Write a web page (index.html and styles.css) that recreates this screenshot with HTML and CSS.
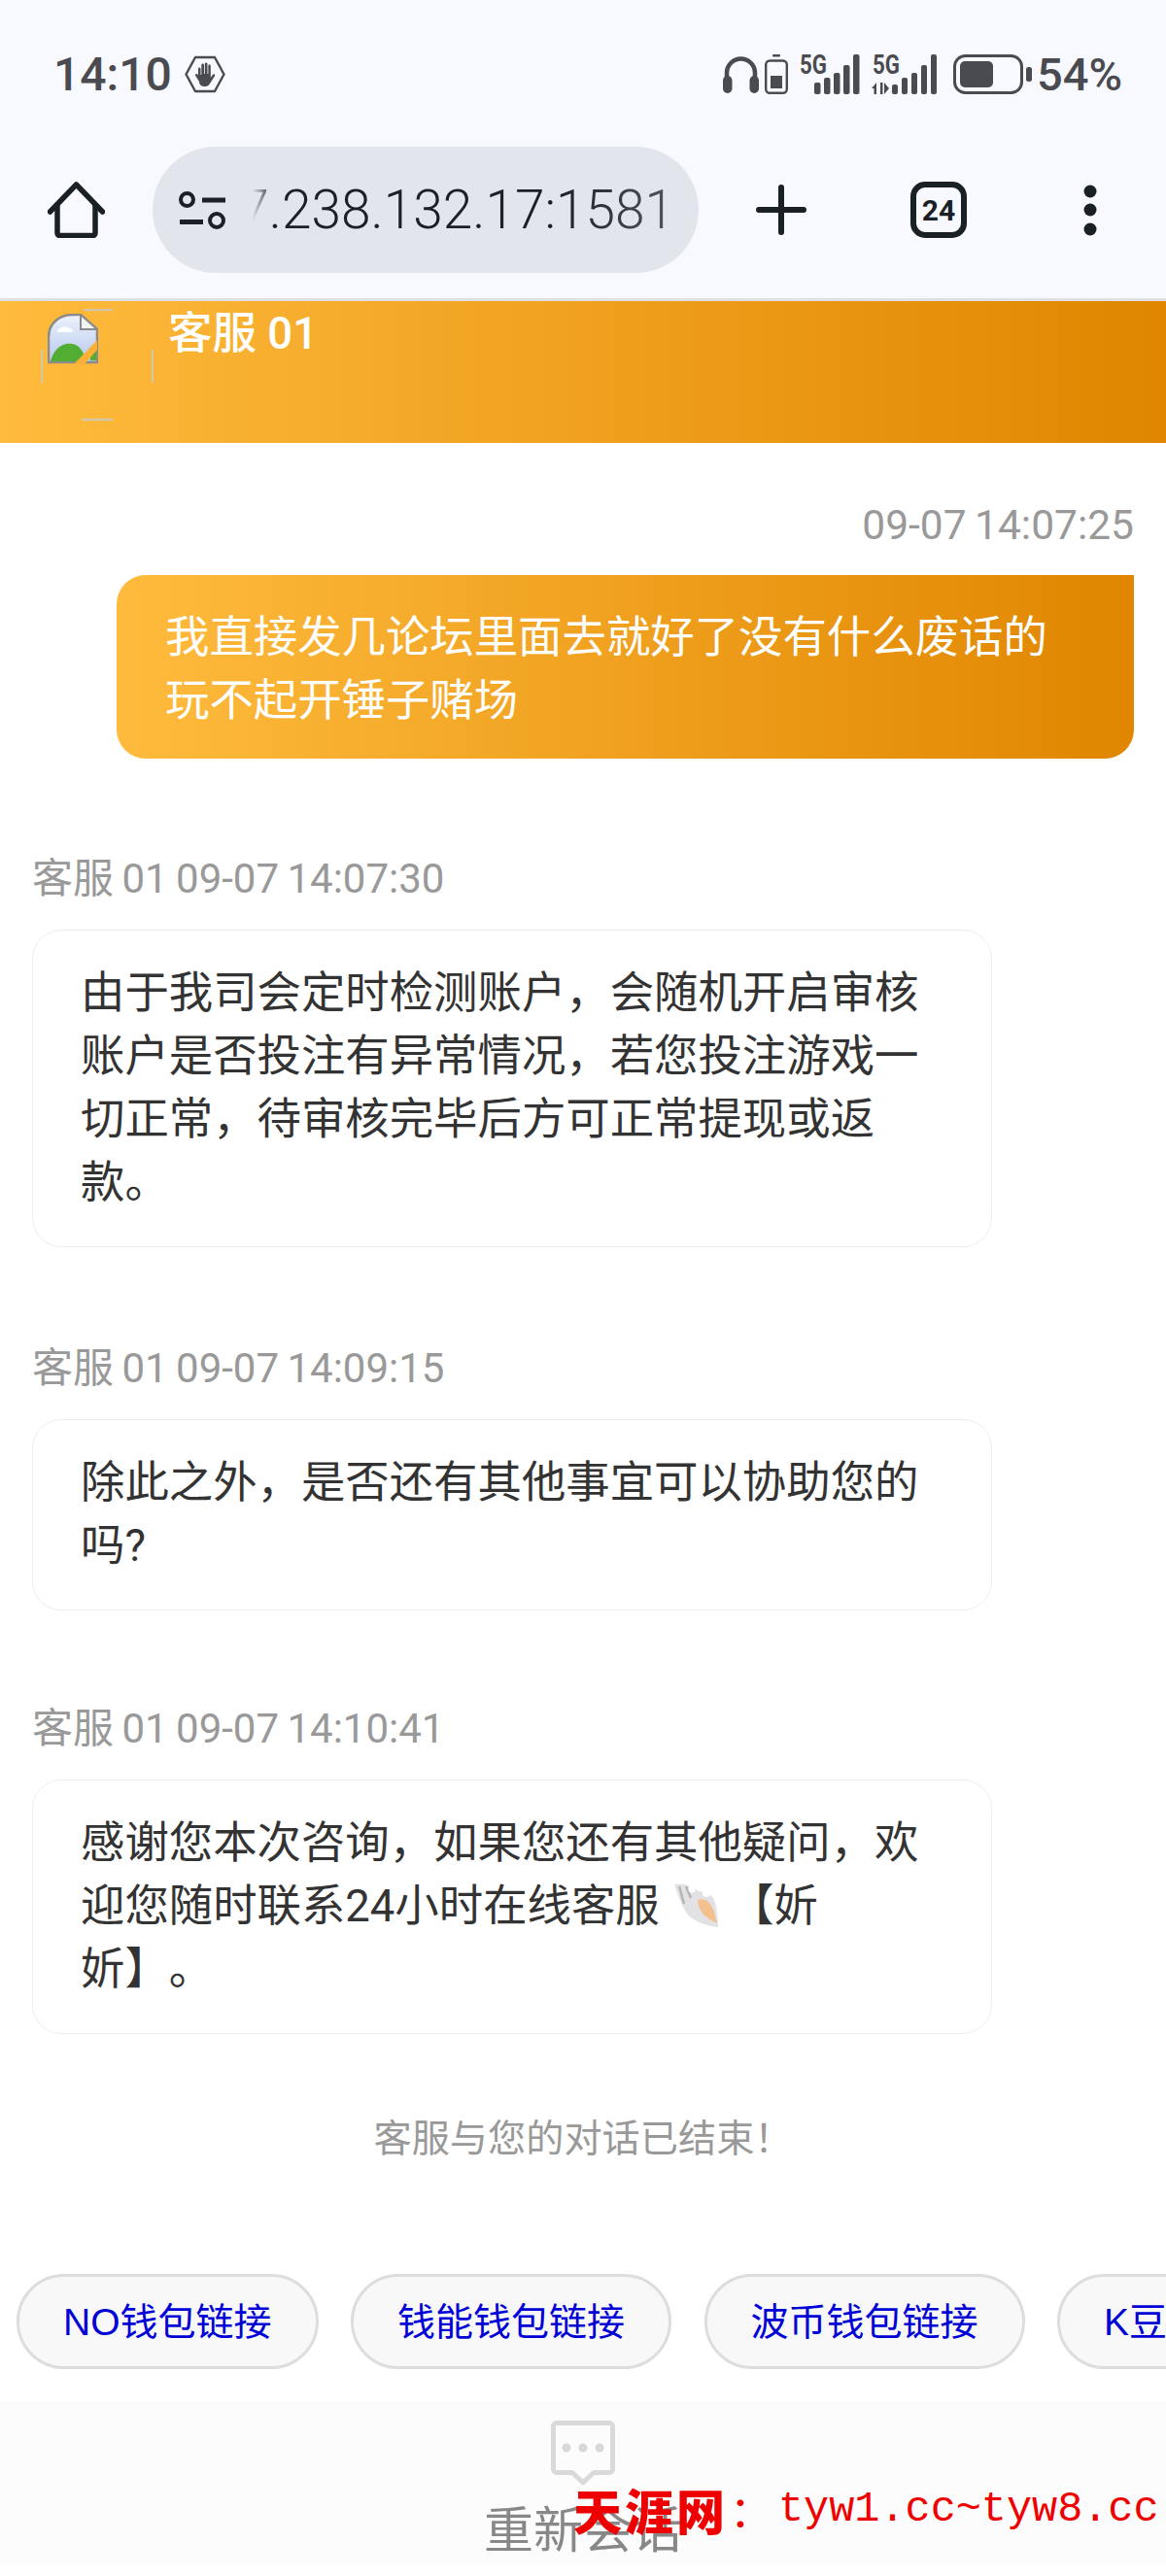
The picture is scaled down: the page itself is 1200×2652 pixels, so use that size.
FILE: index.html
```html
<!DOCTYPE html>
<html lang="zh-CN">
<head>
<meta charset="utf-8">
<title>客服 01</title>
<link rel="stylesheet" href="styles.css">
</head>
<body>
<div class="page">
  <header class="chrome">
    <div class="status">
      <div class="status-left">
        <span class="time">14:10</span>
        <svg class="hand" viewBox="0 0 42 39"><path d="M11 2h20l9.500 17.500L31 37H11L1.500 19.500z" fill="none" stroke="#4a4b50" stroke-width="2.400" stroke-linejoin="round"/><path d="M14 14c0-2 2.500-2 2.500 0v6h.800V10c0-2 2.700-2 2.700 0v9h.800V9c0-2 2.700-2 2.700 0v10h.800v-8c0-2 2.500-2 2.500 0v12l2-3c1.300-1.500 3-.3 2.200 1.200L26 29c-1 2-2.500 3-5 3-4 0-6-2-6-5l-3.800-6c-1-1.600 1-2.800 2.200-1.400l.6.900z" fill="#4a4b50"/></svg>
      </div>
      <div class="status-right">
        <svg class="headphones" viewBox="0 0 37 39"><path d="M4 32V18a14.500 14.500 0 0 1 29 0v14" fill="none" stroke="#4a4b50" stroke-width="4.500"/><rect x="0" y="21" width="9.500" height="18" rx="4.700" fill="#4a4b50"/><rect x="27.500" y="21" width="9.500" height="18" rx="4.700" fill="#4a4b50"/></svg>
        <svg class="minibat" viewBox="0 0 24 41"><rect x="8" y="0" width="8" height="2.500" rx="1" fill="#4a4b50"/><rect x="1.200" y="6.500" width="21.600" height="33.300" rx="4" fill="none" stroke="#4a4b50" stroke-width="2.400"/><rect x="6" y="22" width="12" height="13" fill="#4a4b50"/></svg>
        <svg class="signal-a" viewBox="0 0 62 41"><text x="0" y="20" class="five-g" textLength="28" lengthAdjust="spacingAndGlyphs">5G</text><rect x="15" y="29" width="6.500" height="12" rx="2" fill="#4a4b50"/><rect x="25" y="24" width="6.500" height="17" rx="2" fill="#4a4b50"/><rect x="35" y="19" width="6.500" height="22" rx="2" fill="#4a4b50"/><rect x="45" y="11" width="6.500" height="30" rx="2" fill="#4a4b50"/><rect x="55" y="0" width="6.500" height="41" rx="2" fill="#4a4b50"/></svg>
        <svg class="signal-b" viewBox="0 0 67 41"><text x="1" y="20" class="five-g" textLength="28" lengthAdjust="spacingAndGlyphs">5G</text><path d="M0 35l5-6v12H2.500v-6zM9 29v12h2.500V29zM13 29l5 6-5 6z" fill="#4a4b50"/><rect x="21" y="31" width="6" height="10" rx="2" fill="#4a4b50"/><rect x="31" y="24" width="6" height="17" rx="2" fill="#4a4b50"/><rect x="41" y="19" width="6" height="22" rx="2" fill="#4a4b50"/><rect x="51" y="11" width="6" height="30" rx="2" fill="#4a4b50"/><rect x="61" y="0" width="6" height="41" rx="2" fill="#4a4b50"/></svg>
        <svg class="battery" viewBox="0 0 81 41"><rect x="1.500" y="1.500" width="69" height="38" rx="11" fill="none" stroke="#4a4b50" stroke-width="3"/><rect x="7" y="7" width="34" height="27" rx="5" fill="#4a4b50"/><rect x="75" y="13" width="6" height="15" rx="2.500" fill="#4a4b50"/></svg>
        <span class="percent">54%</span>
      </div>
    </div>
    <nav class="toolbar">
      <svg class="home" viewBox="0 0 59 58"><path d="M2.500 31L29.500 3l27 28" fill="none" stroke="#1b1f26" stroke-width="5.500" stroke-linecap="round" stroke-linejoin="round"/><path d="M10 24v29c0 1.500 1 2.500 2.500 2.500h34c1.500 0 2.500-1 2.500-2.500V24" fill="none" stroke="#1b1f26" stroke-width="5.500" stroke-linejoin="round"/></svg>
      <div class="address">
        <svg class="tune" viewBox="0 0 48 39"><circle cx="8.500" cy="8.500" r="6.500" fill="none" stroke="#1b1f26" stroke-width="4"/><rect x="24" y="6.500" width="24" height="5" fill="#1b1f26"/><rect x="1" y="29" width="24" height="5" fill="#1b1f26"/><circle cx="39" cy="30" r="7" fill="none" stroke="#1b1f26" stroke-width="4"/></svg>
        <div class="url"><span>7.238.132.17:1581</span></div>
      </div>
      <svg class="plus" viewBox="0 0 52 52"><path d="M26 3v46M3 26h46" stroke="#1b1f26" stroke-width="6" stroke-linecap="round"/></svg>
      <div class="tabs">24</div>
      <svg class="dots" viewBox="0 0 14 53"><circle cx="7" cy="7" r="6.500" fill="#1b1f26"/><circle cx="7" cy="26" r="6.500" fill="#1b1f26"/><circle cx="7" cy="46" r="6.500" fill="#1b1f26"/></svg>
    </nav>
  </header>

  <section class="chat-head">
    <div class="avatar">
      <svg class="avatar-ring" viewBox="0 0 116 116"><path d="M44 1h30M42 114h32M1 42v34M115 42v34" stroke="#d6c6a8" stroke-width="2.500" fill="none"/></svg>
      <svg class="broken" viewBox="0 0 52 52">
        <defs><linearGradient id="sky" x1="0" y1="0" x2="0" y2="1"><stop offset="0" stop-color="#eef3fb"/><stop offset="1" stop-color="#b4c8ee"/></linearGradient></defs>
        <path d="M1 50V24C1 10 12 1 26 1h8l17 15v34z" fill="url(#sky)" stroke="#8b8b8b" stroke-width="2.500"/>
        <path d="M34 1v15h17z" fill="#f4f4f4" stroke="#8b8b8b" stroke-width="2"/>
        <path d="M10 18c1-4 8-6 12-3 3 0 5 2 3 4H10z" fill="#fff"/>
        <path d="M3 49c3-13 13-20 22-18 7 1 12 6 14 18z" fill="#52ae32"/>
        <path d="M44 36h6v12h-6z" fill="#52ae32"/>
        <path d="M27 52l24-25v10L38 52z" fill="#fcb135"/>
      </svg>
    </div>
    <h1 class="agent-name">客服 01</h1>
  </section>

  <main class="chat">
    <article class="msg msg-self">
      <div class="meta">09-07 14:07:25</div>
      <div class="bubble bubble-self">我直接发几论坛里面去就好了没有什么废话的玩不起开锤子赌场</div>
    </article>
    <article class="msg msg-agent msg-first">
      <div class="meta">客服 01 09-07 14:07:30</div>
      <div class="bubble bubble-agent">由于我司会定时检测账户，会随机开启审核账户是否投注有异常情况，若您投注游戏一切正常，待审核完毕后方可正常提现或返款。</div>
    </article>
    <article class="msg msg-agent">
      <div class="meta">客服 01 09-07 14:09:15</div>
      <div class="bubble bubble-agent">除此之外，是否还有其他事宜可以协助您的吗?</div>
    </article>
    <article class="msg msg-agent msg-last">
      <div class="meta">客服 01 09-07 14:10:41</div>
      <div class="bubble bubble-agent">感谢您本次咨询，如果您还有其他疑问，欢迎您随时联系24小时在线客服 <svg class="shell" viewBox="0 0 46 45"><path d="M0 1c8-2 18 2 25 7 8 1 15 3 17 12 2 8 3 16 3 25-10-1-25-5-32-14C7 22 3 10 0 1z" fill="#e2e2e4"/><path d="M24 17c8-3 14 3 17 13l3 11c-8-4-19-9-20-24z" fill="#f3c08e"/><path d="M5 3l5 18M12 3l5 12" stroke="#b5b5b8" stroke-width="2.500" fill="none"/><circle cx="18" cy="6" r="3.500" fill="#fff"/><circle cx="33" cy="10" r="4" fill="#fff"/></svg> 【妡<br>妡】。</div>
    </article>
    <p class="ended">客服与您的对话已结束！</p>
  </main>

  <div class="quick">
    <a class="chip">NO钱包链接</a>
    <a class="chip">钱能钱包链接</a>
    <a class="chip">波币钱包链接</a>
    <a class="chip">K豆钱包链接</a>
  </div>

  <footer class="restart">
    <svg class="restart-icon" viewBox="0 0 66 66"><path d="M6 2.500h54a3.500 3.500 0 0 1 3.500 3.500v44a3.500 3.500 0 0 1-3.500 3.500H44L33 64 22 53.500H6A3.500 3.500 0 0 1 2.500 50V6A3.500 3.500 0 0 1 6 2.500z" fill="none" stroke="#d9d9d9" stroke-width="5" stroke-linejoin="round"/><circle cx="16" cy="28" r="4.500" fill="#d9d9d9"/><circle cx="33" cy="28" r="4.500" fill="#d9d9d9"/><circle cx="50" cy="28" r="4.500" fill="#d9d9d9"/></svg>
    <div class="restart-label">重新会话</div>
  </footer>

  <div class="watermark"><b>天涯网</b><span class="wm-colon">：</span><span class="wm-url">tyw1.cc~tyw8.cc</span></div>
</div>
</body>
</html>
```
FILE: styles.css
```css
* { box-sizing: border-box; }
html, body { margin: 0; padding: 0; }
body { background: #fff; font-family: Roboto, "Noto Sans CJK SC", sans-serif; color: #333; }
.page { position: relative; width: 1200px; height: 2652px; overflow: hidden; }

.chrome { background: #f8f9ff; border-bottom: 3px solid #dfe0e3; height: 310px; }
.status { height: 151px; padding: 56px 45px 0 55px; display: flex; justify-content: space-between; align-items: flex-start; color: #4a4b50; }
.status-left { display: flex; align-items: center; }
.time { font-size: 48px; font-weight: 500; line-height: 41px; }
.hand { width: 42px; height: 39px; margin-left: 13px; }
.status-right { display: flex; align-items: center; height: 41px; }
.headphones { width: 37px; height: 39px; }
.minibat { width: 24px; height: 41px; margin-left: 6px; }
.signal-a { width: 62px; height: 41px; margin-left: 12px; }
.signal-b { width: 67px; height: 41px; margin-left: 12px; }
.battery { width: 81px; height: 41px; margin-left: 17px; }
.percent { font-size: 47px; font-weight: 500; line-height: 41px; margin-left: 5px; }
.five-g { font-family: Roboto, sans-serif; font-size: 27px; font-weight: 700; fill: #4a4b50; }

.toolbar { display: flex; align-items: center; height: 130px; padding-left: 49px; }
.home { width: 59px; height: 58px; }
.address { width: 562px; height: 130px; margin-left: 49px; border-radius: 65px; background: #e2e5ec; display: flex; align-items: center; padding: 0 22px 0 27px; }
.tune { width: 48px; height: 39px; flex: none; }
.url { flex: 1; margin-left: 28px; overflow: hidden; display: flex; justify-content: flex-end; padding-right: 3px; font-size: 55px; font-weight: 300; color: #1b1f26; white-space: nowrap; -webkit-mask-image: linear-gradient(90deg, transparent 0, #000 5%, #000 72%, rgba(0,0,0,.72) 100%); mask-image: linear-gradient(90deg, transparent 0, #000 5%, #000 72%, rgba(0,0,0,.72) 100%); }
.plus { width: 52px; height: 52px; margin-left: 59px; }
.tabs { width: 58px; height: 58px; margin-left: 107px; border: 6px solid #1b1f26; border-radius: 15px; font-size: 30px; font-weight: 700; color: #1b1f26; display: flex; align-items: center; justify-content: center; }
.dots { width: 14px; height: 53px; margin-left: 120px; }

.chat-head { height: 146px; background: linear-gradient(90deg, #ffbb3d, #e08600); position: relative; display: flex; align-items: flex-start; padding-left: 173px; }
.avatar { position: absolute; left: 42px; top: 8px; width: 116px; height: 116px; }
.avatar-ring { position: absolute; inset: 0; width: 116px; height: 116px; }
.broken { position: absolute; left: 7px; top: 5px; width: 52px; height: 52px; }
.agent-name { margin: 9px 0 0; font-size: 45.500px; font-weight: 500; line-height: 50px; color: #fff; }

.chat { height: 1880px; padding: 55px 33px 0; }
.msg { display: flex; flex-direction: column; margin-bottom: 94px; }
.msg-self { align-items: flex-end; }
.msg-self .meta { font-size: 42.500px; }
.msg-agent { align-items: flex-start; margin-bottom: 92px; }
.msg-first { margin-bottom: 95px; }
.msg-last { margin-bottom: 78px; }
.meta { font-size: 42px; word-spacing: -2px; line-height: 60px; color: #999; }
.bubble { font-size: 45.400px; line-height: 65px; margin-top: 21px; text-spacing-trim: space-all; }
.bubble-self { width: 1047px; padding: 32px 50px 27px; color: #fff; background: linear-gradient(90deg, #ffbb3d, #e08600); border-radius: 30px 0 30px 30px; }
.bubble-agent { width: 988px; padding: 32px 45px 33px 49px; color: #333; background: #fff; border: 1px solid #eee; border-radius: 30px; margin-top: 22px; }
.shell { width: 46px; height: 45px; vertical-align: -6px; margin: 0 0 0 4px; }
.ended { margin: 0; text-align: center; font-size: 39.200px; line-height: 60px; color: #999; }

.quick { position: absolute; left: 17px; top: 2341px; display: flex; gap: 33.500px; white-space: nowrap; }
.chip { height: 98px; padding: 0 45px; border: 3px solid #ddd; border-radius: 49px; background: #f8f8f8; color: #0000d6; font-family: "Liberation Sans", "Noto Sans CJK SC", sans-serif; font-size: 39px; line-height: 94px; }

.restart { position: absolute; left: 0; top: 2472px; width: 1200px; height: 168px; background: #fcfcfc; display: flex; flex-direction: column; align-items: center; padding-top: 20px; }
.restart-icon { width: 66px; height: 66px; }
.restart-label { font-size: 51px; line-height: 60px; margin-top: 18px; color: #888; }

.watermark { position: absolute; left: 590px; top: 2553px; height: 60px; display: flex; align-items: center; color: #ee0000; white-space: nowrap; }
.watermark b { font-size: 50px; font-weight: 900; letter-spacing: 3px; }
.wm-colon { font-size: 44px; margin-left: 2px; width: 50px; }
.wm-url { font-family: "Liberation Mono", monospace; font-size: 43.500px; }
```
